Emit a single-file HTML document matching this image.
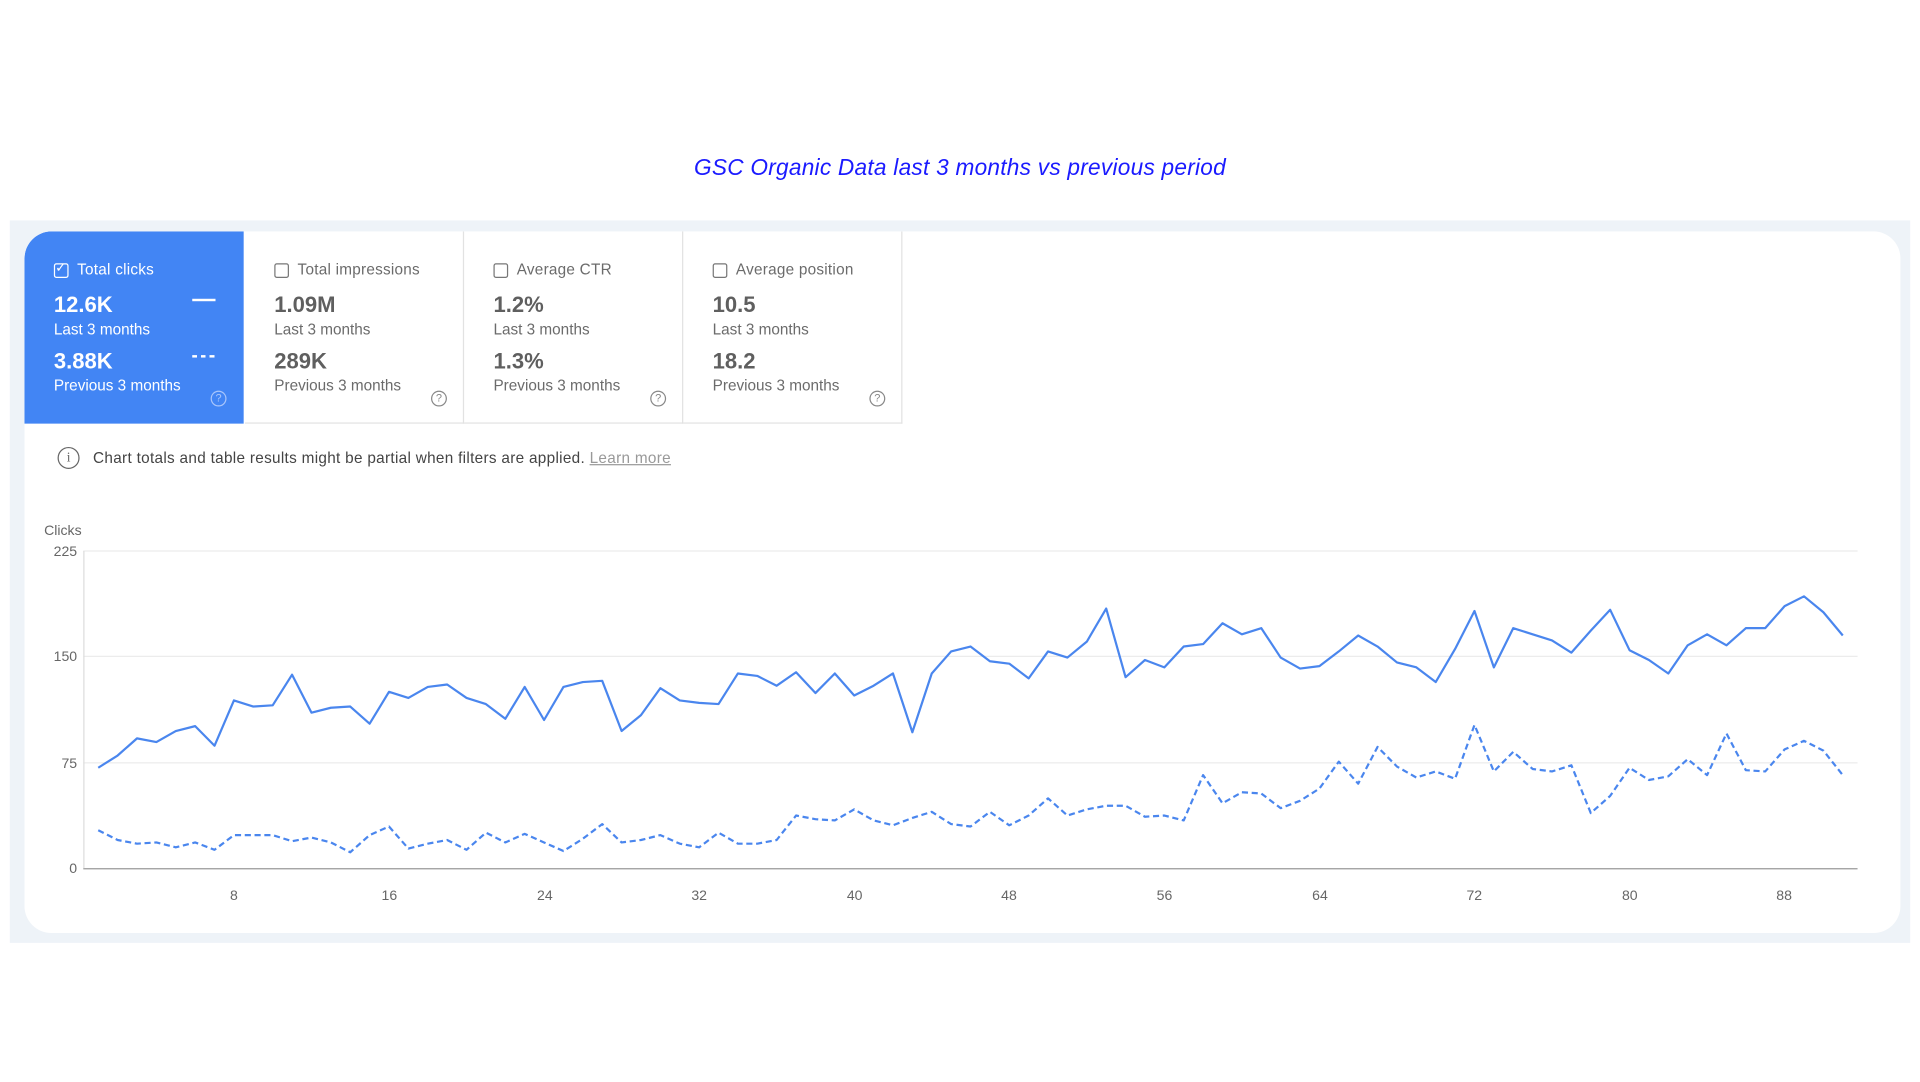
<!DOCTYPE html>
<html><head><meta charset="utf-8">
<style>
html,body{margin:0;padding:0;background:#fff;width:1920px;height:1082px;overflow:hidden;font-family:"Liberation Sans",Arial,sans-serif}
#w{position:absolute;left:0;top:0;width:1568px;height:884px;transform:scale(1.22449);transform-origin:0 0}
.title{position:absolute;left:0;width:1568px;top:126px;text-align:center;color:#1a1aff;font-style:italic;font-size:18.5px;letter-spacing:0.2px}
.panel{position:absolute;left:8px;top:180px;width:1552px;height:590px;background:#eef3f8}
.card{position:absolute;left:20px;top:189px;width:1532px;height:573px;background:#fff;border-radius:22px;overflow:hidden}
.tab{position:absolute;top:0;width:179px;height:157px;box-sizing:border-box;border-right:1px solid #e2e2e2;border-bottom:1px solid #e2e2e2;color:#6b6b6b}
.tab.on{background:#4285f4;color:#fff;border:none;border-top-left-radius:22px}
.cb{position:absolute;left:24px;top:26px;width:10px;height:10px;border:1.5px solid #777;border-radius:2px}
.on .cb{border-color:#fff}
.lbl{position:absolute;left:43px;top:24px;font-size:12.5px;letter-spacing:0.2px}
.v{position:absolute;left:24px;font-size:18px;font-weight:bold;color:#5f5f5f}
.on .v{color:#fff}
.s{position:absolute;left:24px;font-size:12.5px}
.q{position:absolute;left:152px;top:130px;width:11px;height:11px;border:1px solid #888;border-radius:50%;font-size:9px;text-align:center;line-height:11px;color:#888}
.on .q{border-color:#a9c6fb;color:#a9c6fb}
.info{position:absolute;left:76px;top:367px;font-size:12.5px;color:#444;letter-spacing:0.25px}
.ic{position:absolute;left:47px;top:365px;width:16px;height:16px;border:1.5px solid #666;border-radius:50%;font-size:11px;text-align:center;line-height:16px;color:#666;font-family:"Liberation Serif",serif}
</style></head><body>
<div id="w">
<div class="title">GSC Organic Data last 3 months vs previous period</div>
<div class="panel"></div>
<div class="card">
 <div class="tab on" style="left:0">
  <div class="cb"></div><div style="position:absolute;left:25px;top:23px;color:#fff;font-size:11px">✓</div>
  <div class="lbl">Total clicks</div>
  <div class="v" style="top:50px">12.6K</div><div style="position:absolute;left:137px;top:55px;width:19px;height:2px;background:#fff"></div>
  <div class="s" style="top:73px">Last 3 months</div>
  <div class="v" style="top:96px">3.88K</div><div style="position:absolute;left:137px;top:101px;width:19px;height:2px;background:repeating-linear-gradient(90deg,#fff 0 4px,transparent 4px 7px)"></div>
  <div class="s" style="top:119px">Previous 3 months</div>
  <div class="q">?</div>
 </div>
 <div class="tab" style="left:180px">
  <div class="cb"></div><div class="lbl">Total impressions</div>
  <div class="v" style="top:50px">1.09M</div><div class="s" style="top:73px">Last 3 months</div>
  <div class="v" style="top:96px">289K</div><div class="s" style="top:119px">Previous 3 months</div><div class="q">?</div>
 </div>
 <div class="tab" style="left:359px">
  <div class="cb"></div><div class="lbl">Average CTR</div>
  <div class="v" style="top:50px">1.2%</div><div class="s" style="top:73px">Last 3 months</div>
  <div class="v" style="top:96px">1.3%</div><div class="s" style="top:119px">Previous 3 months</div><div class="q">?</div>
 </div>
 <div class="tab" style="left:538px">
  <div class="cb"></div><div class="lbl">Average position</div>
  <div class="v" style="top:50px">10.5</div><div class="s" style="top:73px">Last 3 months</div>
  <div class="v" style="top:96px">18.2</div><div class="s" style="top:119px">Previous 3 months</div><div class="q">?</div>
 </div>
</div>
<div class="ic">i</div>
<div class="info">Chart totals and table results might be partial when filters are applied. <span style="color:#999;text-decoration:underline">Learn more</span></div>
<svg style="position:absolute;left:0;top:0" width="1568" height="884" font-family="Liberation Sans, Arial, sans-serif" font-size="11.5" fill="#666">
 <text x="36" y="437">Clicks</text>
 <g text-anchor="end"><text x="63" y="454">225</text><text x="63" y="540">150</text><text x="63" y="627">75</text><text x="63" y="713">0</text></g>
 <g stroke="#ececec" stroke-width="1"><line x1="68" y1="450" x2="1517" y2="450"/><line x1="68" y1="536" x2="1517" y2="536"/><line x1="68" y1="623" x2="1517" y2="623"/></g>
 <line x1="68" y1="709.5" x2="1517" y2="709.5" stroke="#999" stroke-width="1"/>
 <line x1="68.5" y1="450" x2="68.5" y2="709" stroke="#ddd" stroke-width="1"/>
 <g text-anchor="middle"><text x="191" y="735">8</text><text x="318" y="735">16</text><text x="445" y="735">24</text><text x="571" y="735">32</text><text x="698" y="735">40</text><text x="824" y="735">48</text><text x="951" y="735">56</text><text x="1078" y="735">64</text><text x="1204" y="735">72</text><text x="1331" y="735">80</text><text x="1457" y="735">88</text></g>
 <g transform="translate(64.4,0) scale(15.83,1)" fill="none" stroke="#4a86ee" stroke-width="1.8" stroke-linejoin="round">
  <polyline vector-effect="non-scaling-stroke" points="1,627 2,617 3,603 4,606 5,597 6,593 7,609 8,572 9,577 10,576 11,551 12,582 13,578 14,577 15,591 16,565 17,570 18,561 19,559 20,570 21,575 22,587 23,561 24,588 25,561 26,557 27,556 28,597 29,584 30,562 31,572 32,574 33,575 34,550 35,552 36,560 37,549 38,566 39,550 40,568 41,560 42,550 43,598 44,550 45,532 46,528 47,540 48,542 49,554 50,532 51,537 52,524 53,497 54,553 55,539 56,545 57,528 58,526 59,509 60,518 61,513 62,537 63,546 64,544 65,532 66,519 67,528 68,541 69,545 70,557 71,530 72,499 73,545 74,513 75,518 76,523 77,533 78,515 79,498 80,531 81,539 82,550 83,527 84,518 85,527 86,513 87,513 88,495 89,487 90,500 91,519"/>
  <polyline vector-effect="non-scaling-stroke" stroke-dasharray="5,3" points="1,678 2,686 3,689 4,688 5,692 6,688 7,694 8,682 9,682 10,682 11,687 12,684 13,688 14,696 15,682 16,675 17,693 18,689 19,686 20,694 21,680 22,688 23,681 24,688 25,695 26,685 27,673 28,688 29,686 30,682 31,689 32,692 33,680 34,689 35,689 36,686 37,666 38,669 39,670 40,661 41,670 42,674 43,668 44,663 45,673 46,675 47,663 48,674 49,666 50,652 51,666 52,661 53,658 54,658 55,667 56,666 57,670 58,633 59,656 60,647 61,648 62,660 63,654 64,644 65,622 66,640 67,610 68,626 69,635 70,630 71,636 72,592 73,630 74,614 75,628 76,630 77,625 78,664 79,650 80,627 81,637 82,634 83,620 84,633 85,599 86,629 87,630 88,612 89,605 90,613 91,633"/>
 </g>
</svg>
</div>
</body></html>
